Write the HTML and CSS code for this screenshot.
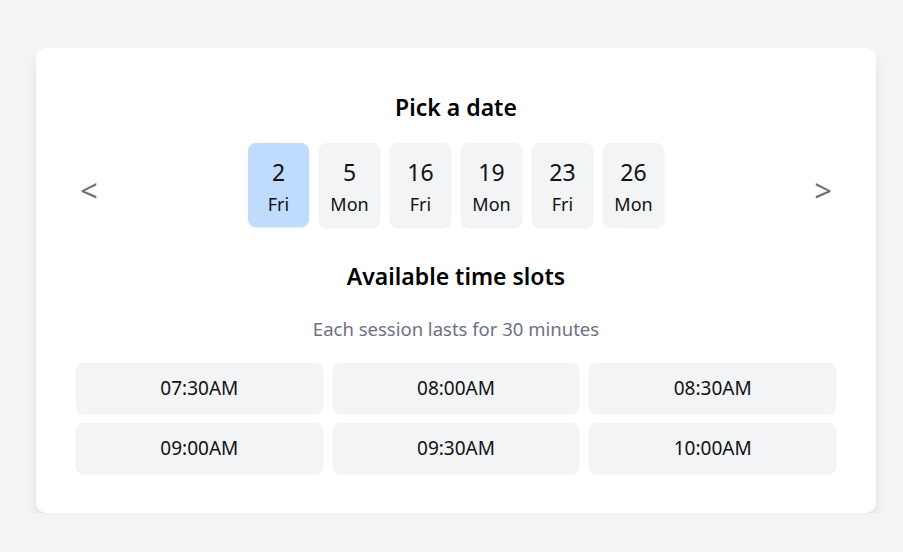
FILE: index.html
```html
<!DOCTYPE html>
<html>
<head>
<meta charset="utf-8">
<link rel="stylesheet" href="styles.css">
</head>
<body>
<div class="card">
  <h2 class="title">Pick a date</h2>
  <div class="date-row">
    <button class="arrow prev">&lt;</button>
    <div class="dates">
      <div class="date active"><span class="num">2</span><span class="day">Fri</span></div>
      <div class="date"><span class="num">5</span><span class="day">Mon</span></div>
      <div class="date"><span class="num">16</span><span class="day">Fri</span></div>
      <div class="date"><span class="num">19</span><span class="day">Mon</span></div>
      <div class="date"><span class="num">23</span><span class="day">Fri</span></div>
      <div class="date"><span class="num">26</span><span class="day">Mon</span></div>
    </div>
    <button class="arrow next">&gt;</button>
  </div>
  <h2 class="title slots-title">Available time slots</h2>
  <p class="sub">Each session lasts for 30 minutes</p>
  <div class="slots">
    <div class="slot">07:30AM</div>
    <div class="slot">08:00AM</div>
    <div class="slot">08:30AM</div>
    <div class="slot">09:00AM</div>
    <div class="slot">09:30AM</div>
    <div class="slot">10:00AM</div>
  </div>
</div>
</body>
</html>
```
FILE: styles.css
```css
* { box-sizing: border-box; }
html, body { margin: 0; padding: 0; }
body {
  background: #f3f4f6;
  font-family: "Noto Sans", "Open Sans", sans-serif;
  color: #111;
  padding: 48px 27px 0 36px;
}
.card {
  width: 840px;
  background: #fff;
  border-radius: 10px;
  box-shadow: 0 10px 15px -3px rgba(0,0,0,0.1), 0 4px 6px -4px rgba(0,0,0,0.1);
  padding: 44px 40px 40px;
}
.title {
  margin: 0;
  text-align: center;
  font-size: 23px;
  line-height: 30px;
  font-weight: 600;
  color: #000;
}
.date-row {
  margin-top: 21px;
  display: grid;
  grid-template-columns: 1fr auto 1fr;
  align-items: center;
}
.arrow {
  background: none;
  border: none;
  font-family: inherit;
  font-size: 31px;
  line-height: 40px;
  color: #6b7280;
  padding: 0;
  margin: 10px 0 0;
  cursor: pointer;
}
.prev { justify-self: start; margin-left: 4px; }
.next { justify-self: end; margin-right: 4px; }
.dates {
  display: flex;
  gap: 10px;
}
.date {
  width: 61px;
  height: 84px;
  border-radius: 8px;
  background: #f3f4f6;
  box-shadow: 0 1px 2px rgba(0,0,0,0.08);
  display: flex;
  flex-direction: column;
  align-items: center;
  padding-top: 14px;
}
.date.active { background: #bfdbfe; }
.num { font-size: 23px; line-height: 30px; }
.day { font-size: 18px; line-height: 26px; margin-top: 4px; }
.slots-title { margin-top: 34px; }
.sub {
  margin: 26px 0 0;
  text-align: center;
  font-size: 18.5px;
  line-height: 24px;
  color: #6b7280;
}
.slots {
  margin-top: 22px;
  display: grid;
  grid-template-columns: repeat(3, 1fr);
  gap: 10px;
}
.slot {
  height: 50px;
  border-radius: 8px;
  background: #f3f4f6;
  box-shadow: 0 1px 2px rgba(0,0,0,0.08);
  display: flex;
  align-items: center;
  justify-content: center;
  font-size: 19px;
}
```
